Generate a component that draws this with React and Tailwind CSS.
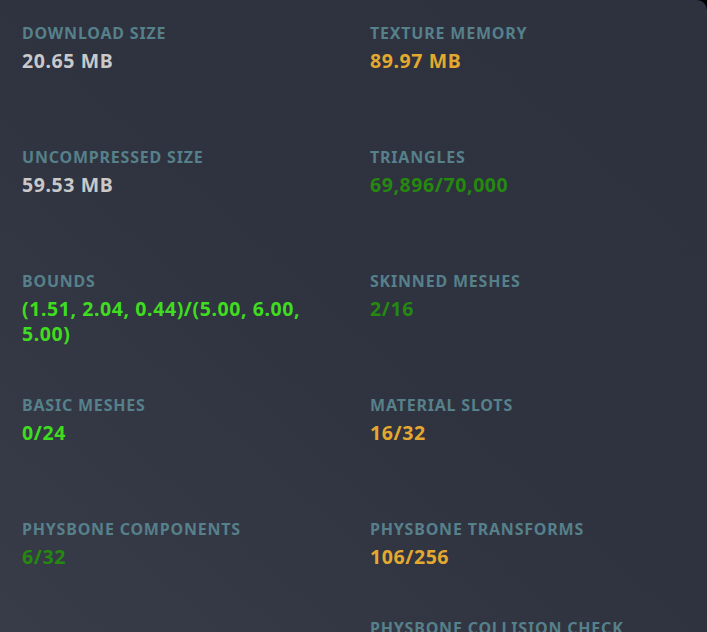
import React from "react";

const left = [
  { label: "DOWNLOAD SIZE", value: "20.65 MB", color: "text-[#c9c9c9]" },
  { label: "UNCOMPRESSED SIZE", value: "59.53 MB", color: "text-[#c9c9c9]" },
  { label: "BOUNDS", value: "(1.51, 2.04, 0.44)/(5.00, 6.00, 5.00)", color: "text-[#3fdc1f]" },
  { label: "BASIC MESHES", value: "0/24", color: "text-[#3fdc1f]" },
  { label: "PHYSBONE COMPONENTS", value: "6/32", color: "text-[#25880f]" },
];
const right = [
  { label: "TEXTURE MEMORY", value: "89.97 MB", color: "text-[#e3a92f]" },
  { label: "TRIANGLES", value: "69,896/70,000", color: "text-[#25880f]" },
  { label: "SKINNED MESHES", value: "2/16", color: "text-[#25880f]" },
  { label: "MATERIAL SLOTS", value: "16/32", color: "text-[#e3a92f]" },
  { label: "PHYSBONE TRANSFORMS", value: "106/256", color: "text-[#e3a92f]", h: "h-[99px]" },
  { label: "PHYSBONE COLLISION CHECK", value: "", color: "text-[#e3a92f]" },
];

function Item({ label, value, color, h }) {
  return (
    <div className={`${h || "h-[124px]"} shrink-0 flex flex-col`}>
      <div className="text-[16px] leading-[20px] font-bold tracking-[0.05em] text-[#56808a] whitespace-nowrap">{label}</div>
      <div className={`text-[19.5px] leading-[25px] font-bold mt-[5px] tracking-[0.03em] max-w-[305px] ${color}`}>{value}</div>
    </div>
  );
}

export default function App() {
  return (
    <div className="w-[707px] h-[632px] bg-black overflow-hidden" style={{ fontFamily: '"Noto Sans", "Open Sans", sans-serif' }}>
      <div className="w-full h-full rounded-tr-[10px] bg-linear-to-tr from-[#383b48] via-[#2f323f] to-[#2e313e] pl-[22px] pt-[23px] flex gap-x-[22px]">
        <div className="w-[326px] shrink-0 flex flex-col">
          {left.map((it) => (
            <Item key={it.label} {...it} />
          ))}
        </div>
        <div className="w-[326px] shrink-0 flex flex-col">
          {right.map((it) => (
            <Item key={it.label} {...it} />
          ))}
        </div>
      </div>
    </div>
  );
}
